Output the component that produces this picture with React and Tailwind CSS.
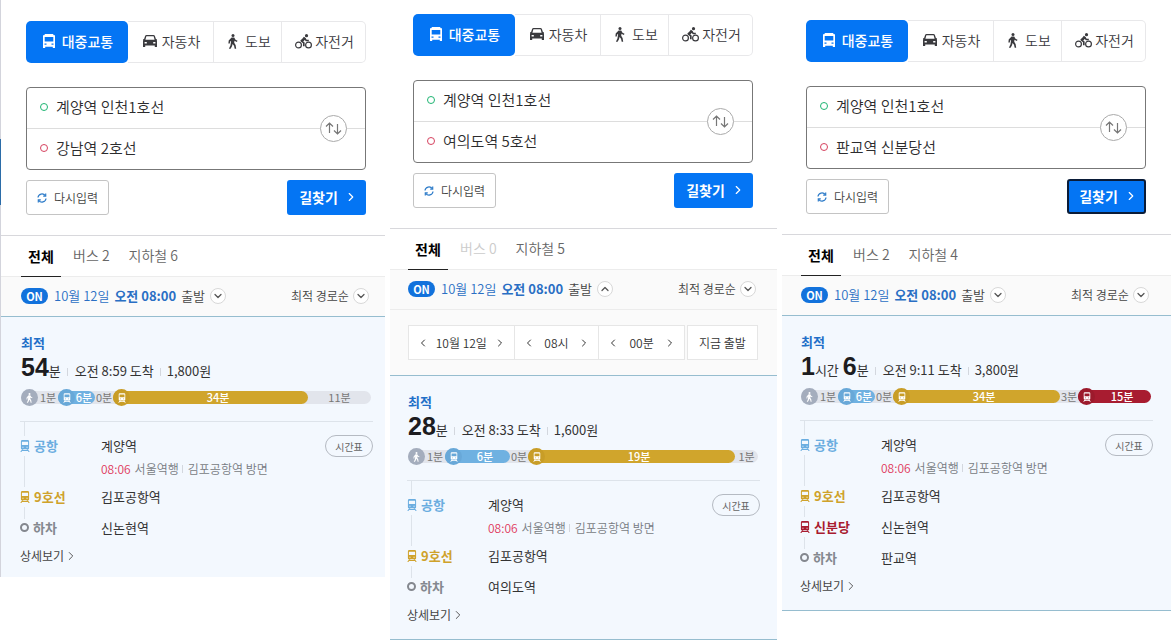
import React, { useState } from 'react';
import { ChevronDown, ChevronLeft, ChevronRight, ChevronUp } from 'lucide-react';

const lineStyles = {
  airport: { text: 'text-[#6aade0]', bg: 'bg-[#6fb1e1]', circle: 'bg-[#68a8d8]' },
  line9: { text: 'text-[#cfa22b]', bg: 'bg-[#d0a52c]', circle: 'bg-[#c89d27]' },
  sinbundang: { text: 'text-[#a81c30]', bg: 'bg-[#a81c30]', circle: 'bg-[#9c1a2c]' },
};

const routes = [
  {
    id: 'gangnam',
    to: '강남역 2호선',
    bus: 2,
    subway: 6,
    time: [['54', '분']],
    arrive: '오전 8:59 도착',
    fare: '1,800원',
    segments: [
      { type: 'walk', label: '1분', size: 37 },
      { type: 'airport', label: '6분', size: 37 },
      { type: 'gap', label: '0분', size: 18 },
      { type: 'line9', label: '34분', size: 195 },
      { type: 'gap', label: '11분', size: 63 },
    ],
    stops: [
      { line: 'line9', name: '9호선', station: '김포공항역' },
      { name: '하차', station: '신논현역' },
    ],
    panelClass: 'relative border-l border-[#d3d4dc] pt-[21px]',
    formClass: 'pl-[25px] pr-[19px]',
    bodyClass: 'pl-[19px] pr-3',
    endClass: 'pb-2',
    marker: true,
  },
  {
    id: 'yeouido',
    to: '여의도역 5호선',
    bus: 0,
    subway: 5,
    open: true,
    time: [['28', '분']],
    arrive: '오전 8:33 도착',
    fare: '1,600원',
    segments: [
      { type: 'walk', label: '1분', size: 37 },
      { type: 'airport', label: '6분', size: 65 },
      { type: 'gap', label: '0분', size: 18 },
      { type: 'line9', label: '19분', size: 207 },
      { type: 'gap', label: '1분', size: 23 },
    ],
    stops: [
      { line: 'line9', name: '9호선', station: '김포공항역' },
      { name: '하차', station: '여의도역' },
    ],
    panelClass: 'pt-3.5',
    formClass: 'pl-[23px] pr-6',
    bodyClass: 'px-[17px]',
    endClass: 'pb-[11px] border-b border-b-[#96bdcf]',
  },
  {
    id: 'pangyo',
    to: '판교역 신분당선',
    bus: 2,
    subway: 4,
    focused: true,
    time: [
      ['1', '시간'],
      ['6', '분'],
    ],
    arrive: '오전 9:11 도착',
    fare: '3,800원',
    segments: [
      { type: 'walk', label: '1분', size: 37 },
      { type: 'airport', label: '6분', size: 37 },
      { type: 'gap', label: '0분', size: 18 },
      { type: 'line9', label: '34분', size: 167 },
      { type: 'gap', label: '3분', size: 18 },
      { type: 'sinbundang', label: '15분', size: 73 },
    ],
    stops: [
      { line: 'line9', name: '9호선', station: '김포공항역' },
      { line: 'sinbundang', name: '신분당', station: '신논현역' },
      { name: '하차', station: '판교역' },
    ],
    panelClass: 'pt-5',
    formClass: 'pl-6 pr-[25px]',
    bodyClass: 'px-[18px]',
    endClass: 'pb-[11px] border-b border-b-[#96bdcf]',
  },
];

const BusIcon = () => (
  <svg viewBox="0 0 12 14" className="w-3 h-3.5" fill="currentColor" aria-hidden="true">
    <path
      fillRule="evenodd"
      d="M2 0h8l.8 1.200H12V14H9.800v-1.300H2.200V14H0V1.200h1.200zM1.700 3v4.500h8.600V3zM1.500 9.500v1.300h2V9.500zm7 0v1.300h2V9.500z"
    />
  </svg>
);

const CarIcon = () => (
  <svg viewBox="0 0 14 12" className="w-3.5 h-3" fill="currentColor" aria-hidden="true">
    <path
      fillRule="evenodd"
      d="M3.500 0h7a1.500 1.500 0 0 1 1.400 1L13 4.200h1v1.300h-.3l.3.800V12h-2.200v-1.400H2.200V12H0V6.300l.3-.8H0V4.200h1L2.100 1A1.500 1.500 0 0 1 3.500 0zM3.400 1.300 2.400 4.700h9.200l-1-3.400zM1.600 7v1.500h2.200V7zm8.600 0v1.500h2.200V7z"
    />
  </svg>
);

const WalkIcon = ({ className }) => (
  <svg viewBox="0 0 10 15" className={className} fill="currentColor" aria-hidden="true">
    <circle cx="5" cy="1.500" r="1.500" />
    <path d="M3.600 3.500h2.600l1.300 2.200 2 1.100-.6 1.200-2.400-1.200-.3 2 1.400 2.200.6 3.800H6.700L6 11.800 4.600 10.100 4 12.300 2.600 14.800H.9l1.600-3.500.6-4.400-1 .7-.3 2H.4l.3-3z" />
  </svg>
);

const BikeIcon = () => (
  <svg viewBox="0 0 17 15" className="w-[17px] h-[15px]" aria-hidden="true">
    <g fill="none" stroke="currentColor">
      <circle cx="3.500" cy="11" r="2.900" strokeWidth="1.200" />
      <circle cx="13.500" cy="11" r="2.900" strokeWidth="1.200" />
      <path
        d="M9.800 4.200 6.300 6.800l2.500 2.100v3.400M9.600 4.500l1.700 2h2.500"
        strokeWidth="1.700"
        strokeLinejoin="round"
      />
    </g>
    <circle cx="11.500" cy="1.700" r="1.600" fill="currentColor" />
    <path d="M8.800 2.700l2.200 1.500-2.400 3-2.700-.3z" fill="currentColor" />
  </svg>
);

const TrainIcon = ({ className }) => (
  <svg viewBox="0 0 11 13" className={className} fill="currentColor" aria-hidden="true">
    <path
      fillRule="evenodd"
      d="M2.500 0h6A1.500 1.500 0 0 1 10 1.500V9a1 1 0 0 1-1 1H2a1 1 0 0 1-1-1V1.500A1.500 1.500 0 0 1 2.500 0zM2.100 1.800v3.600h6.800V1.800zM2.700 7.300v1h1.100v-1zm4.500 0v1h1.100v-1z"
    />
    <path d="M2.300 10h1.500l-.5.900h4.400l-.5-.9h1.500l2 3H9.400l-.6-1H2.200l-.6 1H.3z" />
  </svg>
);

const SwapIcon = () => (
  <svg
    viewBox="0 0 17 13"
    className="w-[17px] h-[13px]"
    fill="none"
    stroke="currentColor"
    strokeWidth="1.2"
    aria-hidden="true"
  >
    <path d="M4.500 11V1M1 4.500 4.500 1 8 4.500M12.500 2v10M9 8.500l3.500 3.500L16 8.500" />
  </svg>
);

const RefreshIcon = () => (
  <svg
    viewBox="0 0 10 10"
    className="w-2.5 h-2.5 text-[#2e7cc9]"
    fill="none"
    stroke="currentColor"
    strokeWidth="1.2"
    aria-hidden="true"
  >
    <path d="M1 4.500A4 4 0 0 1 8.300 2.700M9 5.500A4 4 0 0 1 1.700 7.300" />
    <path d="M8.700.600v2.500H6.200M1.300 9.400V6.900h2.500" />
  </svg>
);

const CircleChevron = ({ up }) => (
  <span className="flex items-center justify-center w-4 h-4 rounded-full border border-[#d8d8d8] bg-white text-[#555]">
    {up ? <ChevronUp size={12} strokeWidth={2.5} /> : <ChevronDown size={12} strokeWidth={2.5} />}
  </span>
);

const ModeTabs = () => (
  <div className="grid grid-cols-[102fr_86fr_68fr_84fr] h-[42px] text-sm font-[350] text-[#3a3a3e]">
    <button
      type="button"
      className="flex items-center justify-center gap-[7px] pl-0.5 pb-0.5 rounded-[5px] bg-[#0475f4] text-white font-medium"
    >
      <BusIcon />
      대중교통
    </button>
    <button
      type="button"
      className="flex items-center justify-center gap-[5px] pl-0.5 pb-0.5 border-y border-r border-[#e8e8ea]"
    >
      <CarIcon />
      자동차
    </button>
    <button
      type="button"
      className="flex items-center justify-center gap-[7px] pl-1 pb-0.5 border-y border-r border-[#e8e8ea]"
    >
      <WalkIcon className="w-2.5 h-[15px]" />
      도보
    </button>
    <button
      type="button"
      className="flex items-center justify-center gap-[3px] pl-0.5 pb-0.5 border-y border-r border-[#e8e8ea] rounded-r-[5px]"
    >
      <BikeIcon />
      자전거
    </button>
  </div>
);

const SearchForm = ({ route }) => (
  <form onSubmit={(e) => e.preventDefault()}>
    <div className="relative mt-6 h-[83px] flex flex-col rounded border border-[#777] text-[15px] font-[350] text-[#2c2c2e]">
      <label className="flex flex-1 items-center gap-2 pl-[13px] pr-14 pb-0.5 border-b border-[#ddd]">
        <span className="w-2 h-2 rounded-full border border-[#1fb573]" />
        <input
          type="text"
          aria-label="출발지"
          defaultValue="계양역 인천1호선"
          className="flex-1 min-w-0 bg-transparent outline-none"
        />
      </label>
      <label className="flex flex-1 items-center gap-2 pl-[13px] pr-14 pb-0.5">
        <span className="w-2 h-2 rounded-full border border-[#d6425f]" />
        <input
          type="text"
          aria-label="도착지"
          defaultValue={route.to}
          className="flex-1 min-w-0 bg-transparent outline-none"
        />
      </label>
      <button
        type="button"
        aria-label="출발지 도착지 바꾸기"
        className="absolute right-[18px] top-[27px] flex items-center justify-center w-[27px] h-[27px] rounded-full border border-[#aaa] bg-white text-[#777]"
      >
        <SwapIcon />
      </button>
    </div>
    <div className="flex justify-between mt-2.5 h-[35px]">
      <button
        type="button"
        className="flex items-center gap-[7px] px-2.5 rounded-[3px] border border-[#c4c4c4] text-xs font-[350] text-[#444]"
      >
        <RefreshIcon />
        다시입력
      </button>
      <button
        type="submit"
        className={`flex items-center justify-center gap-1.5 w-[79px] pl-1 pb-0.5 rounded-[3px] border-2 bg-[#0475f4] text-white text-sm font-bold ${
          route.focused ? 'border-[#0a1c38]' : 'border-[#0475f4]'
        }`}
      >
        길찾기
        <ChevronRight size={14} />
      </button>
    </div>
  </form>
);

const Stepper = ({ label }) => (
  <div className="flex items-center justify-between px-2 border-r border-[#e6e6e6] last:border-r-0">
    <button type="button" aria-label={`${label} 이전`}>
      <ChevronLeft size={12} />
    </button>
    {label}
    <button type="button" aria-label={`${label} 다음`}>
      <ChevronRight size={12} />
    </button>
  </div>
);

const TimePicker = () => (
  <div className="flex gap-0.5 h-[35px] text-xs font-[350] text-[#333]">
    <div className="flex-1 grid grid-cols-[106fr_85fr_85fr] border border-[#e6e6e6] bg-white">
      <Stepper label="10월 12일" />
      <Stepper label="08시" />
      <Stepper label="00분" />
    </div>
    <button type="button" className="w-[71px] border border-[#e6e6e6] bg-white">
      지금 출발
    </button>
  </div>
);

const DurationBar = ({ segments }) => (
  <div className="flex items-center h-[17px] text-[11px] leading-none text-[#777]">
    <div className="flex flex-1 items-center h-[13px] rounded-full bg-[#e2e5ec]">
      {segments.map(({ type, label, size }, i) => {
        const style = lineStyles[type];
        return (
          <div
            key={i}
            className={`flex items-center min-w-0 h-[13px] rounded-full whitespace-nowrap ${
              style ? `${style.bg} text-white font-medium` : ''
            }`}
            style={{ flex: `${size} 1 0px` }}
          >
            {type !== 'gap' && (
              <span
                className={`flex shrink-0 items-center justify-center w-[17px] h-[17px] rounded-full text-white ${
                  style ? style.circle : 'bg-[#a4adbd]'
                }`}
              >
                {style ? (
                  <TrainIcon className="w-2 h-2.5" />
                ) : (
                  <WalkIcon className="w-[7px] h-2.5" />
                )}
              </span>
            )}
            <span className={`flex-1 text-center ${style ? 'pr-0.5' : ''}`}>{label}</span>
          </div>
        );
      })}
    </div>
  </div>
);

const StopName = ({ line, name }) => (
  <span
    className={`flex items-center gap-1 w-[81px] font-bold ${
      line ? lineStyles[line].text : 'text-[#84888f]'
    }`}
  >
    <span className="relative py-1 bg-[#f3f8fe]">
      {line ? (
        <TrainIcon className="w-2.5 h-3" />
      ) : (
        <span className="block w-[9px] h-[9px] rounded-full border-2 border-[#84888f]" />
      )}
    </span>
    {name}
  </span>
);

const Divider = ({ className }) => <span className={`w-px h-2 bg-[#d3d7de] ${className}`} />;

const RoutePanel = ({ route }) => {
  const [open, setOpen] = useState(Boolean(route.open));
  const [on, setOn] = useState(true);

  return (
    <section className={route.panelClass}>
      {route.marker && (
        <span className="absolute -left-px top-[139px] w-px h-[66px] bg-[#2b6ca8]" />
      )}
      <div className={route.formClass}>
        <ModeTabs />
        <SearchForm route={route} />
      </div>

      <div
        className={`flex mt-5 h-[42px] border-t border-t-[#d8d8dc] border-b border-b-[#ececec] text-sm text-[#666] ${route.bodyClass}`}
      >
        <button
          type="button"
          className="w-10 ml-px mr-3 -mb-px pb-px border-b border-[#222] font-bold text-black"
        >
          전체
        </button>
        <button
          type="button"
          disabled={!route.bus}
          className="mr-[19px] pb-0.5 font-[350] disabled:text-[#ccc]"
        >
          버스 {route.bus}
        </button>
        <button type="button" className="pb-0.5 font-[350]">
          지하철 {route.subway}
        </button>
      </div>

      <div className={`flex items-center h-[39px] pb-0.5 bg-[#fafafa] ${route.bodyClass}`}>
        <button
          type="button"
          aria-pressed={on}
          onClick={() => setOn(!on)}
          className="ml-px w-[27px] h-4 rounded-full bg-[#1272dc] text-[11px] leading-4 font-bold text-white"
        >
          ON
        </button>
        <button
          type="button"
          aria-expanded={open}
          onClick={() => setOpen(!open)}
          className="flex items-center gap-[5px] ml-1.5 text-[13px] font-[350] text-[#444]"
        >
          <span className="text-[#2a6fc4]">10월 12일</span>
          <b className="text-[#2a6fc4]">오전 08:00</b>
          <span>출발</span>
          <CircleChevron up={open} />
        </button>
        <label className="flex items-center gap-1 ml-auto mr-1 text-xs font-[350] text-[#444]">
          <select aria-label="정렬" className="appearance-none bg-transparent outline-none">
            <option>최적 경로순</option>
          </select>
          <CircleChevron />
        </label>
      </div>

      {open && (
        <div className="border-t border-[#ececec] bg-[#fafafa] py-[15px]">
          <div className={route.bodyClass}>
            <div className="pl-px pr-0.5">
              <TimePicker />
            </div>
          </div>
        </div>
      )}

      <div
        className={`border-t border-t-[#96bdcf] bg-[#f3f8fe] pt-4 ${route.bodyClass} ${route.endClass}`}
      >
        <div className="pl-px pr-0.5">
          <p className="h-5 leading-5 text-[13px] font-bold text-[#1f6fc8]">최적</p>
          <p className="flex items-baseline h-7 leading-7 text-[13px] text-[#333]">
            {route.time.map(([value, unit]) => (
              <React.Fragment key={unit}>
                <strong className="font-['Liberation_Sans',sans-serif] text-[25px] text-[#1c1c20]">
                  {value}
                </strong>
                <span className="mr-1">{unit}</span>
              </React.Fragment>
            ))}
            <Divider className="ml-0.5 mr-[7px]" />
            {route.arrive}
            <Divider className="mx-1.5" />
            {route.fare}
          </p>
          <div className="mt-2">
            <DurationBar segments={route.segments} />
          </div>
        </div>

        <ul className="relative mt-[15px] pt-2.5 border-t border-[#dde3ea] text-[13px] text-[#333]">
          <li className="absolute left-[4px] top-0 bottom-5 w-px bg-[#dde3ea]" aria-hidden="true" />
          <li className="mb-[3px]">
            <div className="flex items-center h-7">
              <StopName line="airport" name="공항" />
              <span>계양역</span>
              <button
                type="button"
                className="ml-auto w-12 h-[22px] rounded-full border border-[#b5bac2] text-[10px] text-[#666]"
              >
                시간표
              </button>
            </div>
            <div className="flex items-center h-[18px] pl-[81px] text-xs font-[350] text-[#777b82]">
              <span className="mr-1 text-[#e0395c]">08:06</span>
              서울역행
              <Divider className="ml-[3px] mr-[5px]" />
              김포공항역 방면
            </div>
          </li>
          {route.stops.map((stop) => (
            <li key={stop.name} className="flex items-center h-[31px]">
              <StopName line={stop.line} name={stop.name} />
              <span>{stop.station}</span>
            </li>
          ))}
        </ul>
        <a href="#detail" className="flex items-center h-[26px] text-xs text-[#444]">
          상세보기
          <ChevronRight size={14} strokeWidth={1.5} />
        </a>
      </div>
    </section>
  );
};

const App = () => {
  return (
    <main className="grid grid-cols-[385fr_387fr_389fr] items-start gap-x-[5px] bg-white font-['Noto_Sans_CJK_KR',sans-serif]">
      {routes.map((route) => (
        <RoutePanel key={route.id} route={route} />
      ))}
    </main>
  );
};

export default App;
